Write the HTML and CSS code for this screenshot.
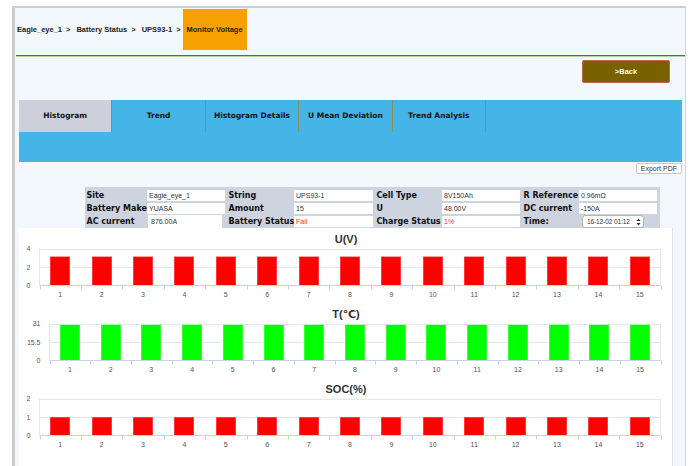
FILE: index.html
```html
<!DOCTYPE html>
<html lang="en">
<head>
<meta charset="utf-8">
<title>Monitor Voltage</title>
<link rel="stylesheet" href="styles.css">
</head>
<body>
<div class="frame">
  <nav class="crumbs">
    <span class="crumb">Eagle_eye_1</span><span class="sep">&gt;</span>
    <span class="crumb">Battery Status</span><span class="sep">&gt;</span>
    <span class="crumb">UPS93-1</span><span class="sep sep-last">&gt;</span>
    <span class="crumb current">Monitor Voltage</span>
  </nav>

  <div class="actions">
    <button class="back">&gt;Back</button>
  </div>

  <div class="tabs">
    <div class="tab-row">
      <div class="tab active">Histogram</div>
      <div class="tab">Trend</div>
      <div class="tab">Histogram Details</div>
      <div class="tab">U Mean Deviation</div>
      <div class="tab">Trend Analysis</div>
    </div>
  </div>

  <div class="export-row">
    <button class="export">Export PDF</button>
  </div>

  <div class="info">
    <div class="lbl">Site</div><div class="val">Eagle_eye_1</div>
    <div class="lbl">String</div><div class="val">UPS93-1</div>
    <div class="lbl">Cell Type</div><div class="val">8V150Ah</div>
    <div class="lbl">R Reference</div><div class="val">0.96mΩ</div>

    <div class="lbl">Battery Make</div><div class="val">YUASA</div>
    <div class="lbl">Amount</div><div class="val">15</div>
    <div class="lbl">U</div><div class="val">48.00V</div>
    <div class="lbl">DC current</div><div class="val">-150A</div>

    <div class="lbl">AC current</div><div class="val inset">876.00A</div>
    <div class="lbl">Battery Status</div><div class="val red">Fail</div>
    <div class="lbl">Charge Status</div><div class="val red">1%</div>
    <div class="lbl">Time:</div>
    <div class="select">
      <span>16-12-02 01:12</span>
      <svg class="updown" width="5" height="8" viewBox="0 0 5 8"><path d="M2.5 0.5 L4.6 3 H0.4 Z M2.5 7.5 L4.6 5 H0.4 Z" fill="#333"/></svg>
    </div>
  </div>

  <div class="charts" id="charts"></div>
</div>
<script src="script.js"></script>
</body>
</html>
```

FILE: styles.css
```css
* {
  box-sizing: border-box;
}

html,
body {
  margin: 0;
  padding: 0;
  background: #ffffff;
  overflow: hidden;
}

body {
  font-family: "Liberation Sans", Arial, sans-serif;
}

/* page frame */
.frame {
  margin: 6px 4px 0 12px;
  height: 460px;
  border-top: 2px solid #cdcdcd;
  border-left: 3px solid #cdcdcd;
  border-right: 1px solid #d6d6d6;
  background: #f3f8fc;
}

/* breadcrumb */
.crumbs {
  display: flex;
  align-items: flex-start;
  height: 48px;
  margin-left: 1px;
  padding: 1px 0 0 1px;
  border-bottom: 1px solid #2c8a2c;
  box-shadow: 0 1px 0 #a8d8a8;
  font-size: 7.5px;
  font-weight: bold;
  line-height: 41px;
  color: #222222;
}

.sep {
  padding: 0 6px 0 4px;
}

.sep-last {
  padding-right: 2px;
}

.crumb.current {
  padding: 0 4px;
  background: #f6a100;
  color: #2a2000;
}

/* back button row */
.actions {
  display: flex;
  justify-content: flex-end;
  height: 44px;
  padding: 4px 15px 0 0;
}

.back {
  width: 88px;
  height: 23px;
  padding: 0;
  background: #7a6100;
  border: 1px solid #c2664c;
  border-radius: 2px;
  color: #ffffff;
  font-family: "Liberation Sans", Arial, sans-serif;
  font-size: 7.5px;
  font-weight: bold;
}

/* tab strip */
.tabs {
  height: 62px;
  margin: 0 3px 0 4px;
  background: #45b4e6;
}

.tab-row {
  display: flex;
  height: 32px;
}

.tab {
  width: 93.4px;
  border-right: 1px solid #86905e;
  text-align: center;
  font-family: "DejaVu Sans", Verdana, sans-serif;
  font-size: 7.5px;
  font-weight: bold;
  line-height: 32px;
  color: #111111;
  white-space: nowrap;
}

.tab.active {
  background: #cdd0da;
}

/* export */
.export-row {
  display: flex;
  justify-content: flex-end;
  height: 25px;
  padding: 1px 3px 0 0;
}

.export {
  height: 11px;
  padding: 0 4px;
  background: #ffffff;
  border: 1px solid #c8c8c8;
  border-radius: 2px;
  font-family: "Liberation Sans", Arial, sans-serif;
  font-size: 7px;
  line-height: 9px;
  color: #333333;
}

/* string information grid */
.info {
  display: grid;
  grid-template-columns: 62px 80px 67px 81px 67px 80px 57px 80px;
  grid-template-rows: 13px 13px 13px;
  width: 575px;
  height: 41px;
  margin-left: 70px;
  padding-top: 2px;
  background: #cdd3df;
}

.lbl {
  align-self: center;
  padding-left: 1.5px;
  font-family: "DejaVu Sans", Verdana, sans-serif;
  font-size: 8px;
  font-weight: bold;
  line-height: 13px;
  color: #111111;
  white-space: nowrap;
}

.val {
  align-self: center;
  height: 11px;
  margin-right: 2px;
  padding-left: 2px;
  background: #ffffff;
  font-size: 7px;
  line-height: 11px;
  color: #333333;
  white-space: nowrap;
}

.val.inset {
  width: 74px;
  height: 13px;
  margin-left: 1px;
  padding-left: 3px;
  line-height: 13px;
}

.val.red {
  color: #ff2a2a;
}

.select {
  display: flex;
  align-items: center;
  justify-content: space-between;
  align-self: center;
  width: 62px;
  height: 13px;
  margin-left: 3px;
  padding: 0 2px 0 4px;
  background: #ffffff;
  border: 1px solid #b5b5b5;
  border-radius: 3px;
  font-size: 6.5px;
  letter-spacing: -0.1px;
  color: #333333;
  white-space: nowrap;
}

.updown {
  display: block;
  flex: none;
}

/* chart panel */
.charts {
  width: 654px;
  height: 240px;
  margin-left: 4px;
  background: #ffffff;
  border-right: 1px solid #dde2e8;
}

.chart {
  display: block;
}

.chart-title {
  font-family: "Liberation Sans", Arial, "DejaVu Sans", sans-serif;
  font-size: 11px;
  font-weight: bold;
  fill: #333333;
}

.axis-label {
  font-family: "Liberation Sans", Arial, sans-serif;
  font-size: 7px;
  fill: #555555;
}

.grid {
  stroke: #e4e8ee;
  stroke-width: 1;
}

.axis {
  stroke: #c5d3e3;
  stroke-width: 1;
}

.bar {
  stroke: rgba(255, 255, 255, 0.45);
  stroke-width: 1;
}
```

FILE: script.js
```js
// Per-cell histograms for the selected battery string.
var CELLS = 15;
var W = 654, H = 75, TOP = 20.5, BOTTOM = 57.5, RIGHT = 641.5;

var charts = [
  { title: 'U(V)', max: 4, ticks: ['0', '2', '4'], value: 3.15, color: '#ff0000', left: 20.5 },
  { title: 'T(\u2103)', max: 31, ticks: ['0', '15.5', '31'], value: 30.2, color: '#00ff00', left: 30.5 },
  { title: 'SOC(%)', max: 2, ticks: ['0', '1', '2'], value: 1, color: '#ff0000', left: 20.5 }
];

function drawChart(c) {
  var cw = (RIGHT - c.left) / CELLS;
  var ph = BOTTOM - TOP;
  var s = '<svg class="chart" width="' + W + '" height="' + H + '" viewBox="0 0 ' + W + ' ' + H + '">';
  s += '<text class="chart-title" x="327" y="15" text-anchor="middle">' + c.title + '</text>';

  // plot frame and horizontal grid
  s += '<line class="grid" x1="' + c.left + '" x2="' + c.left + '" y1="' + TOP + '" y2="' + BOTTOM + '"/>';
  s += '<line class="grid" x1="' + RIGHT + '" x2="' + RIGHT + '" y1="' + TOP + '" y2="' + BOTTOM + '"/>';
  for (var i = 0; i < c.ticks.length; i++) {
    var y = BOTTOM - i * ph / (c.ticks.length - 1);
    var yl = Math.round(y) + 0.5;
    if (i > 0) {
      s += '<line class="grid" x1="' + c.left + '" x2="' + RIGHT + '" y1="' + yl + '" y2="' + yl + '"/>';
    }
    s += '<text class="axis-label" x="' + (c.left - 9) + '" y="' + (y + 2.5) + '" text-anchor="end">' + c.ticks[i] + '</text>';
  }

  // bars
  for (var k = 0; k < CELLS; k++) {
    var cx = c.left + (k + 0.5) * cw;
    var h = c.value / c.max * ph;
    s += '<rect class="bar" fill="' + c.color + '" x="' + Math.round(cx - 10) + '" y="' + (BOTTOM - h).toFixed(1) +
      '" width="20" height="' + h.toFixed(1) + '"/>';
    s += '<text class="axis-label" x="' + cx.toFixed(1) + '" y="68.5" text-anchor="middle">' + (k + 1) + '</text>';
  }

  // x axis with category ticks
  s += '<line class="axis" x1="' + c.left + '" x2="' + RIGHT + '" y1="' + BOTTOM + '" y2="' + BOTTOM + '"/>';
  for (var t = 0; t <= CELLS; t++) {
    var tx = Math.round(c.left + t * cw) + 0.5;
    s += '<line class="axis" x1="' + tx + '" x2="' + tx + '" y1="' + BOTTOM + '" y2="' + (BOTTOM + 4) + '"/>';
  }
  s += '</svg>';
  return s;
}

var out = '';
for (var n = 0; n < charts.length; n++) {
  out += drawChart(charts[n]);
}
document.getElementById('charts').innerHTML = out;
```
